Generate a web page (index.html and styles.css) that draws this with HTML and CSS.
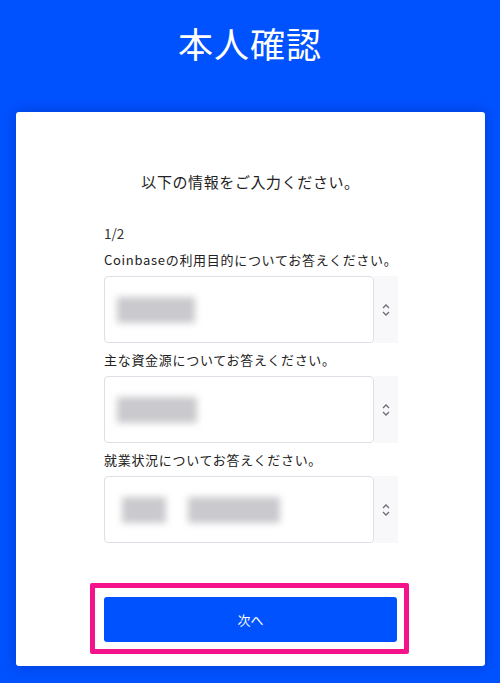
FILE: index.html
```html
<!DOCTYPE html>
<html lang="ja">
<head>
<meta charset="utf-8">
<title>本人確認</title>
<link rel="stylesheet" href="styles.css">
</head>
<body>
<header class="header"><h1 class="title">本人確認</h1></header>
<main class="card">
  <p class="lead">以下の情報をご入力ください。</p>
  <div class="form">
    <div class="step">1/2</div>
    <div class="field">
      <label class="label">Coinbaseの利用目的についてお答えください。</label>
      <div class="select">
        <div class="box"><span class="blur b1"></span></div>
        <div class="arrow"><svg width="10" height="16" viewBox="0 0 10 16"><path d="M2 6 L5 3 L8 6 M2 10 L5 13 L8 10" fill="none" stroke="#6b6e78" stroke-width="1.3"/></svg></div>
      </div>
    </div>
    <div class="field">
      <label class="label">主な資金源についてお答えください。</label>
      <div class="select">
        <div class="box"><span class="blur b2"></span></div>
        <div class="arrow"><svg width="10" height="16" viewBox="0 0 10 16"><path d="M2 6 L5 3 L8 6 M2 10 L5 13 L8 10" fill="none" stroke="#6b6e78" stroke-width="1.3"/></svg></div>
      </div>
    </div>
    <div class="field">
      <label class="label">就業状況についてお答えください。</label>
      <div class="select">
        <div class="box"><span class="blur b3a"></span><span class="blur b3b"></span></div>
        <div class="arrow"><svg width="10" height="16" viewBox="0 0 10 16"><path d="M2 6 L5 3 L8 6 M2 10 L5 13 L8 10" fill="none" stroke="#6b6e78" stroke-width="1.3"/></svg></div>
      </div>
    </div>
  </div>
  <div class="frame"><button class="next">次へ</button></div>
</main>
</body>
</html>
```
FILE: styles.css
```css
html, body { margin: 0; padding: 0; }
body {
  width: 500px;
  height: 683px;
  overflow: hidden;
  background: #0052ff;
  font-family: "Noto Sans CJK JP", "Noto Sans", sans-serif;
  color: #1e2025;
}
.header {
  height: 84px;
  display: flex;
  align-items: center;
  justify-content: center;
  margin-bottom: 28px;
}
.title {
  margin: 0;
  color: #fff;
  font-size: 35px;
  font-weight: 400;
  line-height: 1;
  letter-spacing: 1px;
}
.card {
  margin: 0 15px 0 16px;
  height: 554px;
  box-sizing: border-box;
  background: #fff;
  border-radius: 3px;
  box-shadow: 0 0 14px rgba(0, 20, 120, 0.35);
  padding-top: 60px;
}
.lead {
  margin: 0;
  text-align: center;
  font-size: 15px;
  line-height: 20px;
  letter-spacing: 0.6px;
  color: #222;
}
.form {
  margin: 31px 0 0 88px;
  width: 294px;
}
.step {
  font-size: 13.5px;
  line-height: 20px;
  color: #333;
  margin-bottom: 8px;
}
.field { margin-bottom: 8px; }
.label {
  display: block;
  font-size: 13px;
  line-height: 18px;
  letter-spacing: 0.7px;
  color: #222;
  white-space: nowrap;
  margin-bottom: 7px;
}
.select {
  display: flex;
  height: 67px;
}
.box {
  flex: 0 0 270px;
  box-sizing: border-box;
  border: 1px solid #dedfe6;
  border-radius: 4px;
  background: #fff;
  display: flex;
  align-items: center;
  padding-left: 12px;
  gap: 22px;
}
.arrow {
  flex: 1;
  background: #f8f8fa;
  display: flex;
  align-items: center;
  justify-content: center;
  padding-top: 1px;
}
.blur {
  display: block;
  height: 26px;
  background: #cacace;
  filter: blur(3.5px);
}
.b1 { width: 78px; }
.b2 { width: 80px; }
.b3a { width: 44px; margin-left: 5px; }
.b3b { width: 92px; }
.frame {
  margin: 40px 0 0 74px;
  width: 319px;
  height: 71px;
  box-sizing: border-box;
  border: 5px solid #f4138b;
  border-radius: 2px;
  padding: 9px 7px 7px 9px;
}
.next {
  display: block;
  width: 100%;
  height: 45px;
  border: 0;
  border-radius: 3px;
  background: #0052ff;
  color: #fff;
  font-family: "Noto Sans CJK JP", "Noto Sans", sans-serif;
  font-size: 13px;
  padding: 0;
}
```
